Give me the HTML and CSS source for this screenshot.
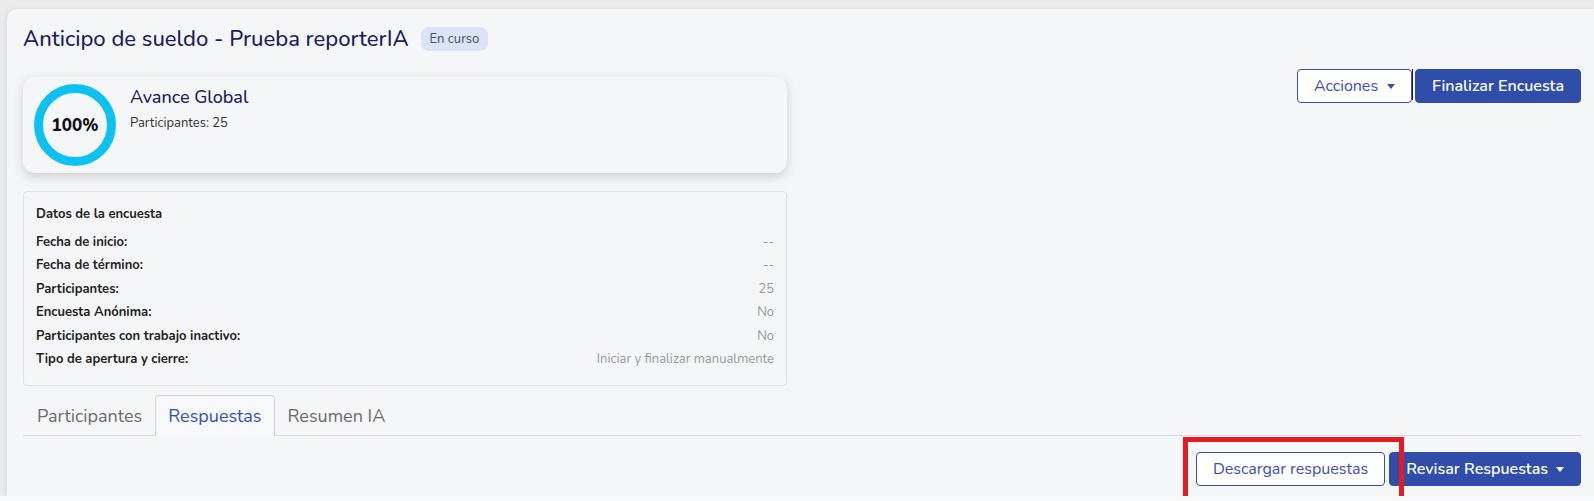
FILE: index.html
```html
<!DOCTYPE html>
<html lang="es">
<head>
    <meta charset="UTF-8">
    <meta name="viewport" content="width=device-width, initial-scale=1.0">
    <title>Encuesta</title>
    <link rel="stylesheet" href="styles.css">
</head>
<body>
<div class="shell">
    <div class="page">
        <div class="head">
            <h1>Anticipo de sueldo - Prueba reporterIA</h1>
            <span class="badge">En curso</span>
        </div>

        <div class="main">
            <div class="left">
                <div class="progress-card">
                    <div class="ring">100%</div>
                    <div class="progress-info">
                        <div class="progress-title">Avance Global</div>
                        <div class="progress-sub">Participantes: 25</div>
                    </div>
                </div>

                <div class="data-box">
                    <div class="data-title">Datos de la encuesta</div>
                    <div class="row"><span>Fecha de inicio:</span><span class="val">--</span></div>
                    <div class="row"><span>Fecha de término:</span><span class="val">--</span></div>
                    <div class="row"><span>Participantes:</span><span class="val">25</span></div>
                    <div class="row"><span>Encuesta Anónima:</span><span class="val">No</span></div>
                    <div class="row"><span>Participantes con trabajo inactivo:</span><span class="val">No</span></div>
                    <div class="row"><span>Tipo de apertura y cierre:</span><span class="val">Iniciar y finalizar manualmente</span></div>
                </div>
            </div>

            <div class="actions">
                <button class="btn btn-outline">Acciones <span class="caret"></span></button>
                <span class="divider"></span>
                <button class="btn btn-primary">Finalizar Encuesta</button>
            </div>
        </div>

        <div class="tabs">
            <div class="tab">Participantes</div>
            <div class="tab active">Respuestas</div>
            <div class="tab">Resumen IA</div>
        </div>

        <div class="tab-actions">
            <span class="marked">
                <button class="btn btn-outline">Descargar respuestas</button>
            </span>
            <button class="btn btn-primary">Revisar Respuestas <span class="caret"></span></button>
        </div>
    </div>
</div>
</body>
</html>
```

FILE: styles.css
```css
* {
    margin: 0;
    padding: 0;
    box-sizing: border-box;
}
body {
    background: #f8f9fa;
    font-family: "Nunito", "Lato", "Open Sans", sans-serif;
    color: #222;
    overflow: hidden;
}
.shell {
    background: #ebebeb;
    height: 496px;
    padding: 9px 0 0 7px;
}
.page {
    height: 487px;
    background: #f5f6f8;
    border-radius: 10px 0 0 0;
    box-shadow: -2px 0 5px rgba(0, 0, 0, 0.06);
    padding: 16px 13px 0 16px;
}

/* header */
.head {
    display: flex;
    align-items: center;
    height: 28px;
}
.head h1 {
    font-size: 22px;
    font-weight: 500;
    color: #1b1f5c;
}
.badge {
    margin-left: 12px;
    background: #dbe3f6;
    color: #4a4f5e;
    font-size: 13px;
    padding: 3px 9px;
    border-radius: 8px;
    line-height: 18px;
}

/* main row */
.main {
    display: flex;
    align-items: flex-start;
}
.left {
    width: 764px;
}
.progress-card {
    display: flex;
    margin-top: 24px;
    height: 96px;
    border-radius: 12px;
    background: #f5f6f8;
    box-shadow: 0 4px 12px rgba(0, 0, 0, 0.16);
    padding: 7px 11px;
}
.ring {
    width: 82px;
    height: 82px;
    border-radius: 50%;
    border: 9px solid #0ec2f0;
    display: flex;
    align-items: center;
    justify-content: center;
    font-weight: 800;
    font-size: 17px;
    color: #111;
}
.progress-info {
    margin-left: 14px;
    padding-top: 1px;
}
.progress-title {
    font-size: 18px;
    font-weight: 500;
    color: #1b1f5c;
    line-height: 24px;
}
.progress-sub {
    font-size: 13px;
    color: #333;
    margin-top: 5px;
}
.data-box {
    margin-top: 18px;
    border: 1px solid #dfe1e5;
    border-radius: 4px;
    padding: 12px 12px 14px 12px;
    font-size: 13px;
}
.data-title {
    font-weight: 700;
    line-height: 20px;
    margin-bottom: 7px;
    color: #222;
}
.row {
    display: flex;
    justify-content: space-between;
    line-height: 23.4px;
    font-weight: 700;
    color: #222;
}
.row .val {
    font-weight: 400;
    color: #9a9a9a;
}

/* buttons */
.actions {
    margin-left: auto;
    margin-top: 16px;
    display: flex;
    align-items: flex-start;
}
.btn {
    font-family: inherit;
    font-size: 16px;
    height: 34px;
    border-radius: 4px;
    padding: 0 16px;
    cursor: pointer;
    display: inline-flex;
    align-items: center;
}
.btn-outline {
    background: #fff;
    color: #3a4faf;
    border: 1px solid #3a4faf;
}
.btn-primary {
    background: #2f4da9;
    color: #fff;
    border: 1px solid #2f4da9;
    font-weight: 600;
}
.caret {
    display: inline-block;
    margin-left: 9px;
    border-top: 5px solid currentColor;
    border-left: 4px solid transparent;
    border-right: 4px solid transparent;
}
.btn-primary .caret {
    margin-left: 8px;
}
.divider {
    width: 1px;
    height: 31px;
    background: #222;
    margin: 0 2px 0 0;
}

/* tabs */
.tabs {
    display: flex;
    margin-top: 9px;
    border-bottom: 1px solid #d9dbe0;
    height: 41px;
}
.tab {
    font-size: 18px;
    color: #6b6b6b;
    padding: 8px 12px 0 12px;
    border: 1px solid transparent;
    border-bottom: none;
    border-radius: 4px 4px 0 0;
}
.tab:first-child {
    padding-left: 13px;
}
.tab.active {
    color: #3550b0;
    background: #f8f9fb;
    border-color: #cfd2d8;
    height: 41px;
}

.tab-actions {
    display: flex;
    justify-content: flex-end;
    gap: 4px;
    margin-top: 16px;
}
.marked {
    position: relative;
}
.marked::after {
    content: "";
    position: absolute;
    left: -13px;
    top: -15px;
    right: -19px;
    bottom: -30px;
    border: 5px solid #e31b22;
    z-index: 2;
}
```
